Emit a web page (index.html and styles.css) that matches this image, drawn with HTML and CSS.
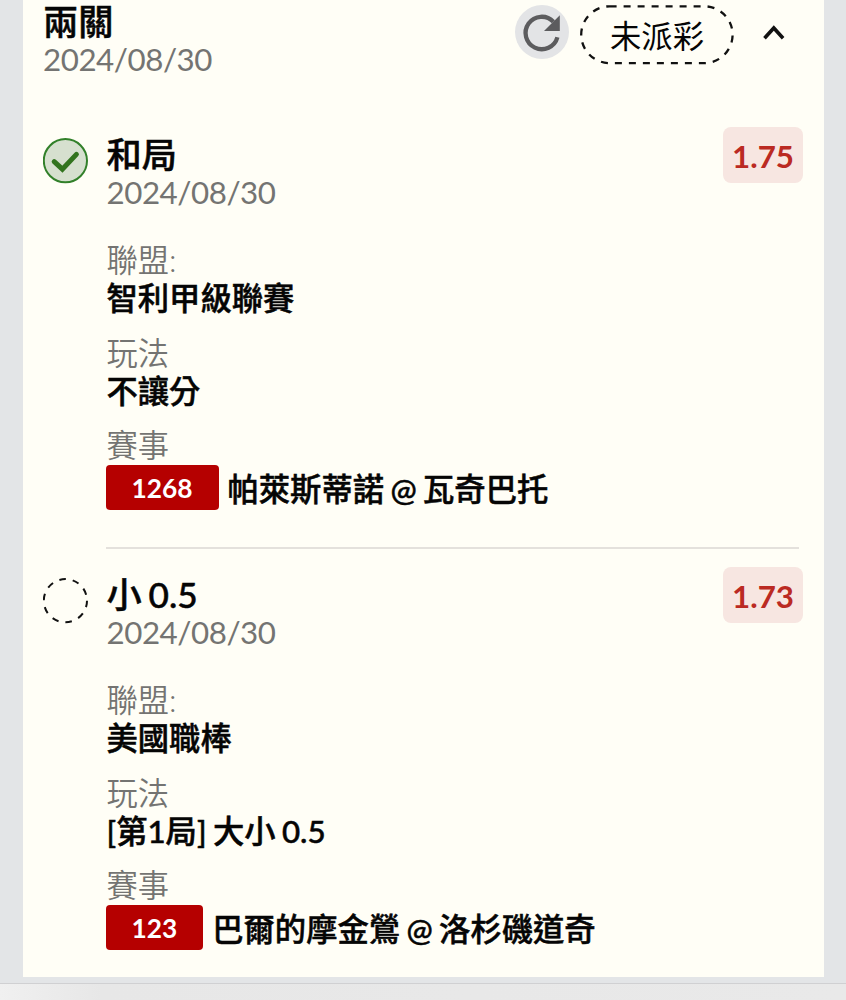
FILE: index.html
```html
<!DOCTYPE html>
<html lang="zh-Hant">
  <head>
    <meta charset="UTF-8" />
    <meta name="viewport" content="width=device-width, initial-scale=1.0" />
    <title>兩關</title>
    <link rel="stylesheet" href="styles.css">
  </head>
  <body>
    <main class="card">
      <header class="slip-head">
        <div class="slip-info">
          <h1 class="name">兩關</h1>
          <p class="date">2024/08/30</p>
        </div>
        <div class="actions">
          <button class="refresh" aria-label="refresh">
            <svg width="54" height="54" viewBox="0 0 54 54">
              <path d="M42.4 32.2A16.2 16.2 0 1 1 38.4 16.7" class="arc" />
              <path d="M44.8 10.2V26H29z" class="tip" />
            </svg>
          </button>
          <span class="status">
            <svg class="dash-box" width="154" height="60" viewBox="0 0 154 60">
              <rect x="1.2" y="1.3" width="151.4" height="56.8" rx="28.4" />
            </svg>
            <span class="status-text">未派彩</span>
          </span>
          <button class="toggle" aria-label="collapse">
            <svg width="24" height="20" viewBox="0 0 24 20">
              <path d="M2.5 15.2L11.8 5l9.3 10.2" />
            </svg>
          </button>
        </div>
      </header>

      <section class="bet">
        <div class="mark">
          <svg width="46" height="46" viewBox="0 0 46 46">
            <circle cx="22.4" cy="22.7" r="21.6" class="won" />
            <path d="M11.2 23.6l8.2 7.6L33.4 16.4" class="check" />
          </svg>
        </div>
        <div class="bet-body">
          <div class="bet-head">
            <div>
              <h2 class="name">和局</h2>
              <p class="date">2024/08/30</p>
            </div>
            <span class="odds">1.75</span>
          </div>
          <dl class="details">
            <dt>聯盟:</dt>
            <dd>智利甲級聯賽</dd>
            <dt>玩法</dt>
            <dd>不讓分</dd>
            <dt>賽事</dt>
            <dd class="match"><span class="tag">1268</span><span class="teams">帕萊斯蒂諾 @ 瓦奇巴托</span></dd>
          </dl>
          <hr class="line">
        </div>
      </section>

      <section class="bet">
        <div class="mark">
          <svg width="46" height="46" viewBox="0 0 46 46">
            <circle cx="22.4" cy="22.7" r="21.6" class="pending" />
          </svg>
        </div>
        <div class="bet-body">
          <div class="bet-head">
            <div>
              <h2 class="name">小 0.5</h2>
              <p class="date">2024/08/30</p>
            </div>
            <span class="odds">1.73</span>
          </div>
          <dl class="details">
            <dt>聯盟:</dt>
            <dd>美國職棒</dd>
            <dt>玩法</dt>
            <dd>[第1局] 大小 0.5</dd>
            <dt>賽事</dt>
            <dd class="match"><span class="tag">123</span><span class="teams">巴爾的摩金鶯 @ 洛杉磯道奇</span></dd>
          </dl>
        </div>
      </section>
    </main>
    <footer class="bottom-bar"></footer>
  </body>
</html>
```
FILE: styles.css
```css
*{
    margin: 0;
    padding: 0;
    box-sizing: border-box;
}
body{
    height: 1000px;
    overflow: hidden;
    display: flex;
    flex-direction: column;
    background-color: #e3e5e7;
    font-family: Lato, "Noto Sans CJK TC", sans-serif;
    font-size: 31.3px;
    color: #050505;
}
button{
    border: none;
    background: none;
    display: flex;
}
.card{
    width: 801px;
    height: 977px;
    margin-left: 23px;
    padding: 0 21px 0 20px;
    background-color: #fffef6;
}
.slip-head{
    height: 127px;
    display: flex;
    justify-content: space-between;
}
.name{
    font-size: 35.2px;
    font-weight: 500;
    line-height: 42px;
    word-spacing: -2px;
    -webkit-text-stroke: 0.5px #050505;
}
.date{
    color: #747472;
    line-height: 35px;
    letter-spacing: -0.45px;
}
.actions{
    display: flex;
    align-items: flex-start;
    padding-top: 5px;
}
.refresh{
    width: 54px;
    height: 54px;
    margin-right: 11px;
    border-radius: 50%;
    background-color: #e3e4e6;
}
.arc{
    fill: none;
    stroke: #5c5c5e;
    stroke-width: 4.3;
}
.tip{
    fill: #5c5c5e;
}
.status{
    display: grid;
    width: 154px;
    height: 60px;
}
.dash-box, .status-text{
    grid-area: 1 / 1;
}
.dash-box rect{
    fill: none;
    stroke: #111;
    stroke-width: 2.3;
    stroke-dasharray: 7 7;
}
.status-text{
    text-align: center;
    line-height: 62px;
}
.toggle{
    margin: 18px 17px 0 28px;
}
.toggle path{
    fill: none;
    stroke: #111;
    stroke-width: 3.6;
}
.bet{
    display: flex;
    height: 440px;
}
.mark{
    width: 63.5px;
    padding-top: 11px;
    flex-shrink: 0;
}
.won{
    fill: #d6e0cf;
    stroke: #32802a;
    stroke-width: 2;
}
.check{
    fill: none;
    stroke: #32741f;
    stroke-width: 5;
    stroke-linecap: round;
}
.pending{
    fill: none;
    stroke: #111;
    stroke-width: 2;
    stroke-dasharray: 6.6 6.97;
}
.bet-body{
    flex: 1;
}
.bet-head{
    height: 115px;
    display: flex;
    justify-content: space-between;
    align-items: flex-start;
    padding-top: 6px;
}
.odds{
    width: 80px;
    height: 56px;
    margin-top: -6px;
    border-radius: 8px;
    background-color: #f7e6e1;
    color: #bb2a22;
    font-weight: 700;
    text-align: center;
    line-height: 58px;
}
.details dt{
    color: #747472;
    line-height: 37px;
    font-weight: 350;
}
.details dd{
    line-height: 38px;
    font-weight: 500;
    word-spacing: -1.5px;
    margin-bottom: 17.6px;
    -webkit-text-stroke: 0.5px #050505;
}
.details .match{
    display: flex;
    align-items: center;
    height: 45px;
    margin-top: 1px;
    margin-bottom: 36.6px;
}
.teams{
    padding-top: 3px;
}
.tag{
    height: 45px;
    margin: 0 9px 0 -1px;
    padding: 0 26px;
    border-radius: 4px;
    background-color: #b50000;
    color: #fff;
    font-size: 26.3px;
    font-weight: 700;
    line-height: 46px;
    -webkit-text-stroke: 0;
}
.line{
    border: none;
    height: 2px;
    margin: 0 4px 0 -1px;
    background-color: #e4e1dc;
}
.bottom-bar{
    height: 17px;
    margin-top: 6px;
    border-top: 1px solid #d0d0d2;
    background: linear-gradient(90deg, #f0f0f0, #e7e7e7 12%, #e9e9e9);
}
```
